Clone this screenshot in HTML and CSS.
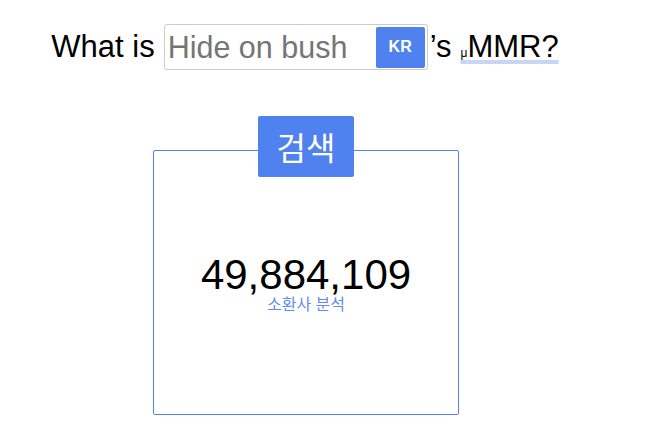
FILE: index.html
```html
<!DOCTYPE html>
<html lang="ko">
<head>
<meta charset="utf-8">
<title>What is Hide on bush's MMR?</title>
<link rel="stylesheet" href="styles.css">
</head>
<body>
<main class="page">
  <div class="question">
    <span class="q-text">What is</span>
    <div class="search-field">
      <input class="summoner-input" type="text" placeholder="Hide on bush">
      <button class="region-btn" type="button">KR</button>
    </div>
    <span class="q-suffix">’s</span>
    <span class="mmr"><span class="mu">μ</span>MMR?</span>
  </div>

  <section class="result">
    <button class="search-btn" type="button">검색</button>
    <div class="card">
      <div class="score">49,884,109</div>
      <a class="analyze" href="#">소환사 분석</a>
    </div>
  </section>
</main>
</body>
</html>
```

FILE: styles.css
```css
* { box-sizing: border-box; }

html, body {
  margin: 0;
  padding: 0;
  background: #ffffff;
}

body {
  font-family: "Liberation Sans", Arial, "Noto Sans CJK KR", sans-serif;
  color: #000;
}

.page {
  width: 612px;
  display: flex;
  flex-direction: column;
  align-items: center;
  padding-top: 24px;
}

.question {
  display: flex;
  align-items: center;
  height: 46px;
  font-size: 31px;
  margin-left: -2px;
}

.q-text {
  margin-right: 9px;
}

.search-field {
  display: flex;
  align-items: center;
  width: 264px;
  height: 46px;
  border: 1px solid #cccccc;
  border-radius: 3px;
  padding: 0 2px 0 3px;
  background: #fff;
}

.summoner-input {
  flex: 1;
  min-width: 0;
  border: none;
  outline: none;
  padding: 0;
  font-family: "Liberation Sans", Arial, sans-serif;
  font-size: 30.5px;
  color: #333;
  background: transparent;
}

.summoner-input::placeholder {
  color: #757575;
}

.region-btn {
  width: 49px;
  height: 41px;
  border: none;
  border-radius: 2px;
  background: #5082ef;
  color: #fff;
  font-family: "Liberation Sans", Arial, sans-serif;
  font-weight: bold;
  font-size: 16px;
  padding: 0;
}

.q-suffix {
  margin-left: 2px;
  margin-right: 9px;
}

.mmr {
  text-decoration: underline;
  text-decoration-color: #c9d5f6;
  text-decoration-thickness: 4px;
  text-underline-offset: 3px;
}

.mu {
  font-size: 12px;
}

.result {
  display: flex;
  flex-direction: column;
  align-items: center;
  margin-top: 46px;
}

.search-btn {
  position: relative;
  z-index: 1;
  width: 96px;
  height: 61px;
  border: none;
  border-radius: 2px;
  background: #5082ef;
  color: #fff;
  font-family: "Noto Sans CJK KR", sans-serif;
  font-size: 32px;
  line-height: 61px;
  padding: 0;
}

.card {
  width: 306px;
  height: 265px;
  margin-top: -27px;
  border: 1px solid #5082ef;
  border-radius: 2px;
  display: flex;
  flex-direction: column;
  align-items: center;
  justify-content: center;
}

.score {
  font-size: 42px;
  line-height: 42px;
}

.analyze {
  font-family: "Noto Sans CJK KR", sans-serif;
  font-size: 16px;
  line-height: 15px;
  color: #5f8cf1;
  text-decoration: none;
}
```
